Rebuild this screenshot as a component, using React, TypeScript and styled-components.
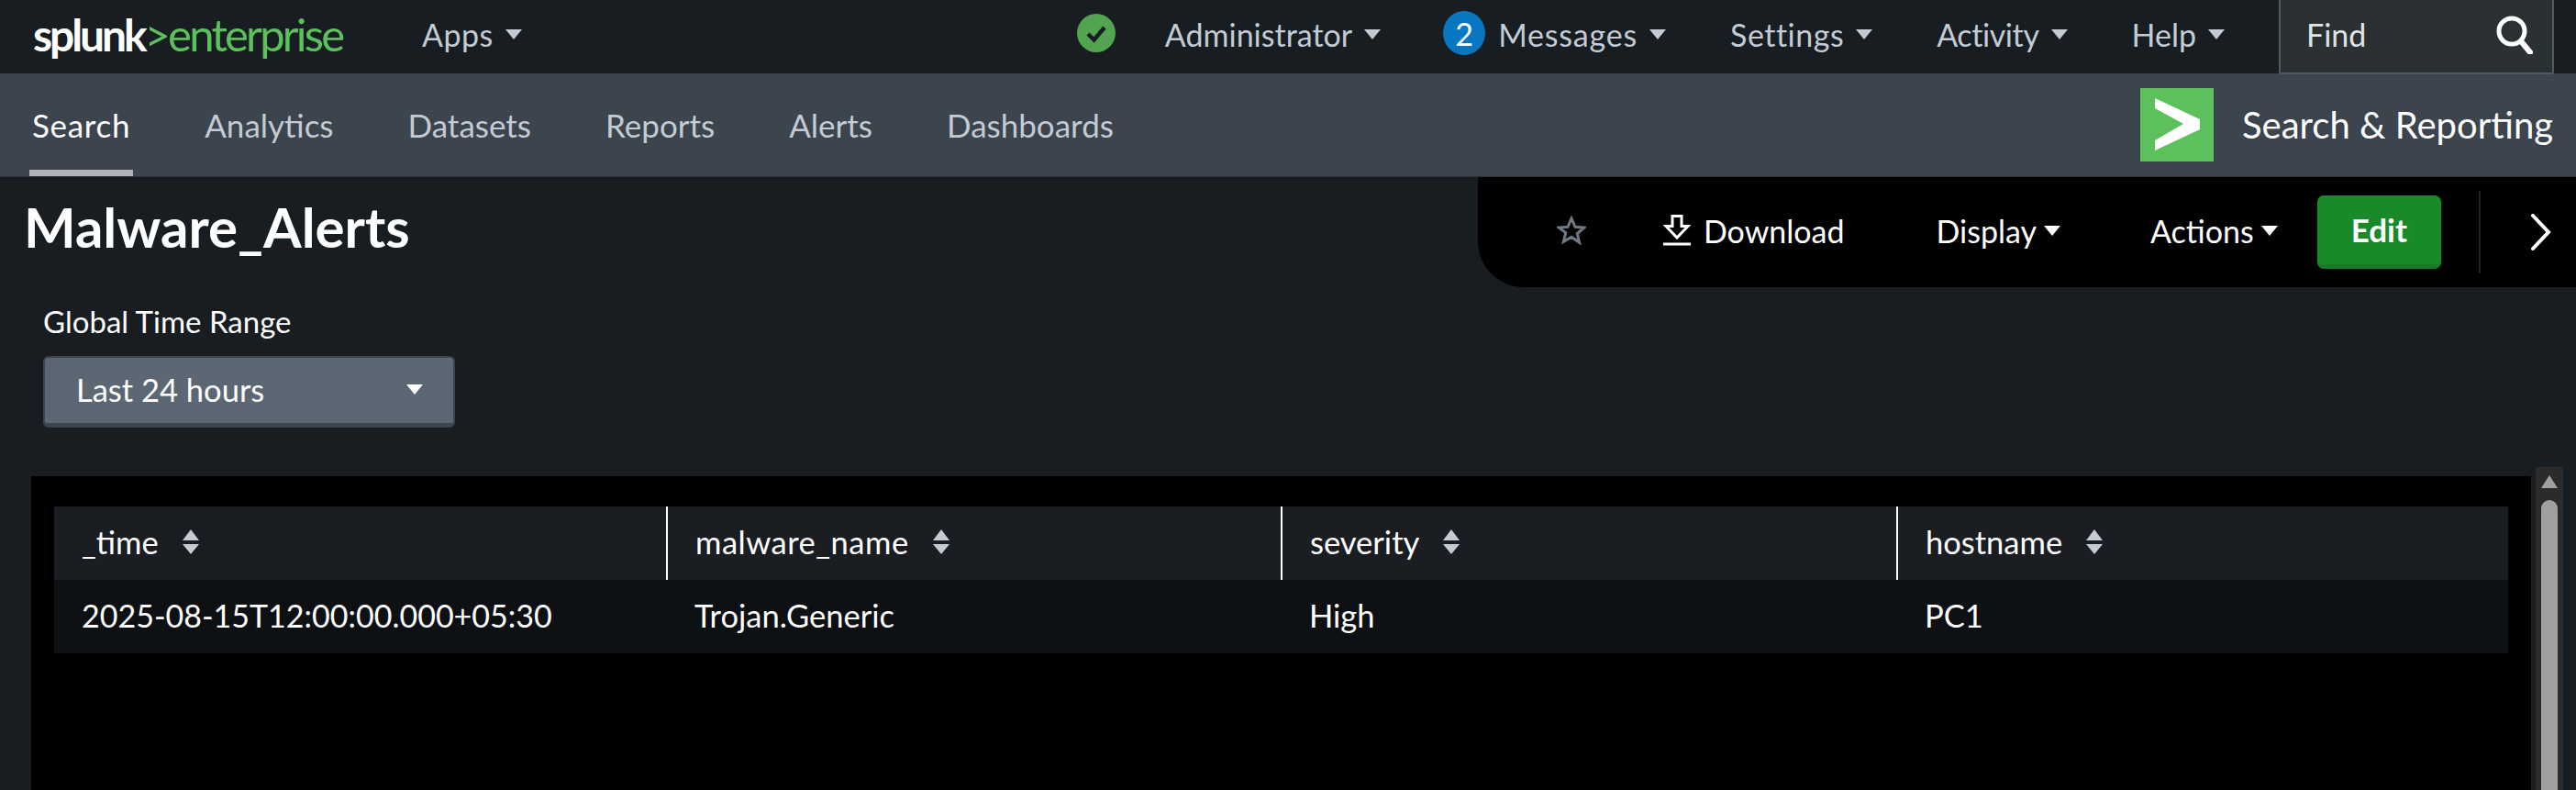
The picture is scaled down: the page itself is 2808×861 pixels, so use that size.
import React from 'react';
import styled, { createGlobalStyle } from 'styled-components';

const GlobalStyle = createGlobalStyle`
  html, body {
    margin: 0;
    padding: 0;
    background: #181d21;
    font-family: Lato, 'Open Sans', sans-serif;
  }
  * { box-sizing: border-box; }
`;

const Page = styled.div`
  width: 2808px;
  height: 861px;
  overflow: hidden;
  display: flex;
  flex-direction: column;
  background: #181d21;
`;

const TopBar = styled.header`
  height: 80px;
  display: flex;
  align-items: center;
  padding-left: 36px;
  background: #171d21;
`;

const Logo = styled.div`
  width: 424px;
  height: 80px;
  display: flex;
  align-items: center;
  padding-bottom: 6px;
  white-space: nowrap;
`;

const LogoWord = styled.span`
  font-size: 48px;
  font-weight: 700;
  letter-spacing: -3.1px;
  color: #fff;
`;

const LogoProduct = styled.span`
  font-size: 49px;
  font-weight: 400;
  letter-spacing: -2.8px;
  color: #5cc05c;
`;

const MenuItem = styled.div<{ $gap?: number; $track?: number }>`
  display: flex;
  align-items: center;
  gap: 13px;
  padding-bottom: 6px;
  font-size: 34px;
  letter-spacing: ${({ $track }) => $track ?? 0}px;
  color: #c3cbd4;
  margin-right: ${({ $gap }) => $gap ?? 0}px;
  white-space: nowrap;
`;

const Caret = styled.i<{ $size?: number; $color?: string }>`
  display: block;
  width: 0;
  height: 0;
  border-left: ${({ $size }) => $size ?? 9}px solid transparent;
  border-right: ${({ $size }) => $size ?? 9}px solid transparent;
  border-top: ${({ $size }) => ($size ?? 9) + 2}px solid ${({ $color }) => $color ?? '#c3cbd4'};
`;

const RightMenu = styled.div`
  margin-left: auto;
  display: flex;
  align-items: center;
  height: 80px;
  padding-right: 24px;
`;

const StatusIcon = styled.svg`
  width: 42px;
  height: 42px;
  margin-right: 54px;
  margin-bottom: 8px;
`;

const Badge = styled.span`
  width: 46px;
  height: 48px;
  margin: 0 14px 8px 0;
  border-radius: 50%;
  background: #0877c2;
  color: #fff;
  display: flex;
  align-items: center;
  justify-content: center;
  font-size: 34px;
`;

const FindBox = styled.div`
  width: 300px;
  height: 81px;
  margin-left: 59px;
  display: flex;
  align-items: center;
  justify-content: space-between;
  padding: 0 21px 4px 28px;
  background: #2b3033;
  border: 2px solid #4f5a65;
  border-top: none;
  border-radius: 0 0 3px 3px;
  color: #dfe3e8;
  font-size: 34px;
  align-self: flex-start;
  position: relative;
  z-index: 2;
`;

const NavBar = styled.nav`
  height: 112px;
  flex: none;
  display: flex;
  align-items: stretch;
  padding: 0 25px 0 32px;
  background: #3c444d;
  box-shadow: 0 1px 0 #2a3037;
  position: relative;
  z-index: 1;
`;

const NavTab = styled.div<{ $active?: boolean }>`
  display: flex;
  align-items: center;
  justify-content: center;
  padding: 0 3px;
  margin-right: 75px;
  font-size: 35px;
  letter-spacing: ${({ $active }) => ($active ? 0.7 : 0)}px;
  color: ${({ $active }) => ($active ? '#fff' : '#c3cbd4')};
  border-bottom: 7px solid ${({ $active }) => ($active ? '#b0b3b8' : 'transparent')};
  border-top: 7px solid transparent;
`;

const AppBrand = styled.div`
  margin-left: auto;
  display: flex;
  align-items: center;
  gap: 31px;
  font-size: 40px;
  color: #fff;
  padding-bottom: 1px;
`;

const AppIcon = styled.div`
  width: 80px;
  height: 80px;
  background: #5cc05c;
  display: flex;
  align-items: center;
  justify-content: center;
`;

const TitleRow = styled.section`
  height: 121px;
  flex: none;
  display: flex;
  justify-content: space-between;
  align-items: flex-start;
  padding-left: 26px;
`;

const Title = styled.h1`
  margin: 20px 0 0;
  font-size: 60px;
  line-height: 70px;
  font-weight: 700;
  color: #fff;
`;

const ActionPanel = styled.div`
  width: 1197px;
  height: 121px;
  background: #000;
  border-radius: 0 0 0 50px;
  display: flex;
  align-items: center;
  color: #fff;
  font-size: 34px;
  padding-left: 86px;
`;

const ActionItem = styled.div<{ $gap: number; $inner?: number }>`
  display: flex;
  align-items: center;
  gap: ${({ $inner }) => $inner ?? 8}px;
  padding-bottom: 3px;
  margin-right: ${({ $gap }) => $gap}px;
  white-space: nowrap;
`;

const EditButton = styled.button`
  width: 135px;
  height: 80px;
  padding: 0 0 1px;
  border: none;
  border-bottom: 5px solid #187a26;
  border-radius: 7px;
  background: #1a8929;
  color: #fff;
  font: 700 35px Lato, sans-serif;
`;

const Divider = styled.div`
  width: 2px;
  height: 90px;
  margin: 0 54px 0 41px;
  background: #222;
`;

const FilterBlock = styled.section`
  padding: 17px 0 0 47px;
  height: 196px;
  flex: none;
`;

const FilterLabel = styled.div`
  font-size: 33px;
  line-height: 40px;
  color: #fff;
`;

const Dropdown = styled.div`
  width: 449px;
  height: 78px;
  margin-top: 18px;
  display: flex;
  align-items: center;
  justify-content: space-between;
  padding: 0 33px 3px 34px;
  background: #5c6773;
  border: 2px solid #3c444d;
  border-bottom-width: 5px;
  border-radius: 6px;
  color: #fff;
  font-size: 34.5px;
`;

const ContentRow = styled.section`
  flex: 1;
  display: flex;
  align-items: stretch;
  padding: 0 14px 0 34px;
  min-height: 0;
`;

const ResultPanel = styled.div`
  flex: 1;
  margin: 10px 5px 0 0;
  padding: 33px 25px 0;
  background: #000;
`;

const ResultTable = styled.table`
  width: 100%;
  table-layout: fixed;
  border-collapse: separate;
  border-spacing: 0;
  color: #fff;
  font-size: 34.5px;
`;

const HeadCell = styled.th<{ $first?: boolean; $width: number }>`
  width: ${({ $width }) => $width}px;
  height: 80px;
  padding: 0 0 3px 30px;
  background: #1a1e23;
  font-weight: 400;
  text-align: left;
  border-left: ${({ $first }) => ($first ? 'none' : '2px solid #fff')};
`;

const HeadInner = styled.div<{ $track?: number }>`
  display: flex;
  align-items: center;
  gap: 26px;
  letter-spacing: ${({ $track }) => $track ?? 0}px;
`;

const SortIcon = styled.div`
  display: flex;
  flex-direction: column;
  gap: 4px;
`;

const UpArrow = styled.i`
  display: block;
  width: 0;
  height: 0;
  border-left: 9px solid transparent;
  border-right: 9px solid transparent;
  border-bottom: 12px solid #c3cbd4;
`;

const BodyCell = styled.td<{ $first?: boolean }>`
  height: 80px;
  padding: 0 0 3px ${({ $first }) => ($first ? 30 : 31)}px;
  background: #0e1114;
`;

const TimeValue = styled.span`
  font-size: 34px;
`;

const Scrollbar = styled.div`
  width: 30px;
  background: #2b2b2b;
  display: flex;
  flex-direction: column;
  align-items: center;
  padding-top: 9px;
  gap: 13px;
`;

const ScrollArrow = styled.i`
  display: block;
  width: 0;
  height: 0;
  border-left: 9px solid transparent;
  border-right: 9px solid transparent;
  border-bottom: 14px solid #a0a0a0;
`;

const ScrollThumb = styled.div`
  width: 18px;
  flex: 1;
  border-radius: 9px 9px 0 0;
  background: #a0a0a0;
`;

const tabs = ['Search', 'Analytics', 'Datasets', 'Reports', 'Alerts', 'Dashboards'];
const columns = [
  { name: '_time', width: 667, track: 0 },
  { name: 'malware_name', width: 670, track: 0.5 },
  { name: 'severity', width: 671, track: 0 },
  { name: 'hostname', width: 667, track: 0 },
];

const App = () => (
  <Page>
    <GlobalStyle />
    <TopBar>
      <Logo>
        <LogoWord>splunk</LogoWord>
        <LogoProduct>&gt;enterprise</LogoProduct>
      </Logo>
      <MenuItem $track={0.5}>
        Apps <Caret />
      </MenuItem>
      <RightMenu>
        <StatusIcon viewBox='0 0 42 42'>
          <circle cx='21' cy='21' r='21' fill='#53a451' />
          <path d='M12 22l6.500 6.500L30 15' fill='none' stroke='#171d21' strokeWidth='4.500' />
        </StatusIcon>
        <MenuItem $gap={68}>
          Administrator <Caret />
        </MenuItem>
        <Badge>2</Badge>
        <MenuItem $gap={70} $track={0.8}>
          Messages <Caret />
        </MenuItem>
        <MenuItem $gap={70} $track={0.5}>
          Settings <Caret />
        </MenuItem>
        <MenuItem $gap={70} $track={-0.4}>
          Activity <Caret />
        </MenuItem>
        <MenuItem>
          Help <Caret />
        </MenuItem>
        <FindBox>
          Find
          <svg width='40' height='42' viewBox='0 0 40 42'>
            <circle cx='17' cy='17' r='14' fill='none' stroke='#fff' strokeWidth='5' />
            <path d='M27 28l10 12' stroke='#fff' strokeWidth='6' strokeLinecap='round' />
          </svg>
        </FindBox>
      </RightMenu>
    </TopBar>

    <NavBar>
      {tabs.map((tab, i) => (
        <NavTab key={tab} $active={i === 0}>
          {tab}
        </NavTab>
      ))}
      <AppBrand>
        <AppIcon>
          <svg width='49' height='57' viewBox='0 0 49 57'>
            <path d='M0 0l49 23v11L0 57V46l31-18L0 11z' fill='#fff' />
          </svg>
        </AppIcon>
        Search &amp; Reporting
      </AppBrand>
    </NavBar>

    <TitleRow>
      <Title>Malware_Alerts</Title>
      <ActionPanel>
        <ActionItem $gap={84}>
          <svg width='32' height='32' viewBox='0 0 32 32'>
            <path
              d='M16 3l4 9.300 9.800.8-7.500 6.500 2.300 9.700L16 23.200l-8.600 5.100 2.300-9.700L2.200 13.100l9.800-.8z'
              fill='none'
              stroke='#6f7a85'
              strokeWidth='3'
            />
          </svg>
        </ActionItem>
        <ActionItem $gap={100} $inner={14}>
          <svg width='30' height='34' viewBox='0 0 30 34'>
            <path d='M10 1.500h10v11h7L15 25 3 12.500h7z' fill='none' stroke='#fff' strokeWidth='3' />
            <path d='M0 32h30' stroke='#fff' strokeWidth='3' />
          </svg>
          Download
        </ActionItem>
        <ActionItem $gap={98}>
          Display <Caret $color='#fff' />
        </ActionItem>
        <ActionItem $gap={43}>
          Actions <Caret $color='#fff' />
        </ActionItem>
        <EditButton>Edit</EditButton>
        <Divider />
        <svg width='24' height='40' viewBox='0 0 24 40'>
          <path d='M3 2l17 18L3 38' fill='none' stroke='#fff' strokeWidth='4' strokeLinecap='round' />
        </svg>
      </ActionPanel>
    </TitleRow>

    <FilterBlock>
      <FilterLabel>Global Time Range</FilterLabel>
      <Dropdown>
        Last 24 hours <Caret $color='#fff' />
      </Dropdown>
    </FilterBlock>

    <ContentRow>
      <ResultPanel>
        <ResultTable>
          <thead>
            <tr>
              {columns.map((column, i) => (
                <HeadCell key={column.name} $first={i === 0} $width={column.width}>
                  <HeadInner $track={column.track}>
                    {column.name}
                    <SortIcon>
                      <UpArrow />
                      <Caret />
                    </SortIcon>
                  </HeadInner>
                </HeadCell>
              ))}
            </tr>
          </thead>
          <tbody>
            <tr>
              <BodyCell $first>
                <TimeValue>2025-08-15T12:00:00.000+05:30</TimeValue>
              </BodyCell>
              <BodyCell>Trojan.Generic</BodyCell>
              <BodyCell>High</BodyCell>
              <BodyCell>PC1</BodyCell>
            </tr>
          </tbody>
        </ResultTable>
      </ResultPanel>
      <Scrollbar>
        <ScrollArrow />
        <ScrollThumb />
      </Scrollbar>
    </ContentRow>
  </Page>
);

export default App;
